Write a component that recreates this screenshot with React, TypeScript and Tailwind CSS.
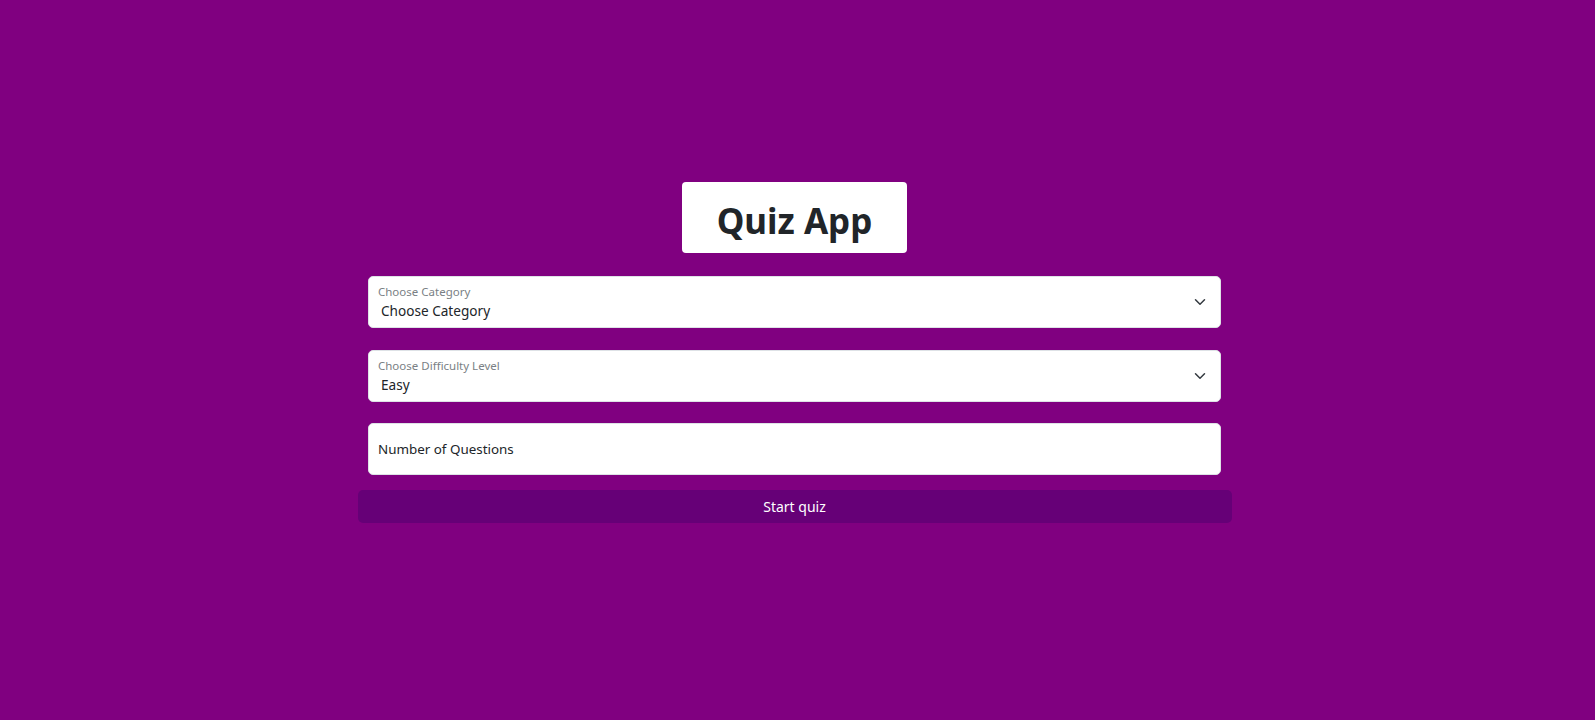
import React from "react";

function Chevron() {
  return (
    <svg width="12" height="12" viewBox="0 0 16 16" fill="none" stroke="#343a40" strokeWidth="2" strokeLinecap="round" strokeLinejoin="round">
      <path d="M2 5l6 6 6-6" />
    </svg>
  );
}

function SelectBox({ label, value }: { label: string; value: string }) {
  return (
    <div className="relative w-[853px] h-[52px] bg-white border border-[#dee2e6] rounded-[5px] flex flex-col pl-[9px] pt-[8px]">
      <span className="text-[11.5px] leading-[14px] text-[#7a7f85]">{label}</span>
      <span className="text-[13.6px] leading-[20px] text-[#212529] pl-[3px] mt-[2px]">{value}</span>
      <div className="absolute right-[14px] top-[19px]">
        <Chevron />
      </div>
    </div>
  );
}

export default function App() {
  return (
    <div
      className="min-h-[720px] w-full bg-[#800080] flex flex-col items-center pt-[182px] pr-[6px]"
      style={{ fontFamily: '"Noto Sans", "Open Sans", sans-serif' }}
    >
      <div className="w-[225px] h-[71px] bg-white rounded-[4px] flex items-center justify-center pt-[5px]">
        <h1 className="text-[35px] font-bold text-[#212529] leading-none">Quiz App</h1>
      </div>
      <div className="w-[874px] mt-[23px] flex flex-col items-center">
        <SelectBox label="Choose Category" value="Choose Category" />
        <div className="h-[22px]" />
        <SelectBox label="Choose Difficulty Level" value="Easy" />
        <div className="h-[21px]" />
        <div className="w-[853px] h-[52px] bg-white border border-[#dee2e6] rounded-[5px] flex items-center pl-[9px]">
          <span className="text-[13.4px] text-[#212529]">Number of Questions</span>
        </div>
        <button className="mt-[15px] w-[874px] h-[33px] bg-[#660077] rounded-[5px] text-white text-[14px] flex items-center justify-center">
          Start quiz
        </button>
      </div>
    </div>
  );
}
